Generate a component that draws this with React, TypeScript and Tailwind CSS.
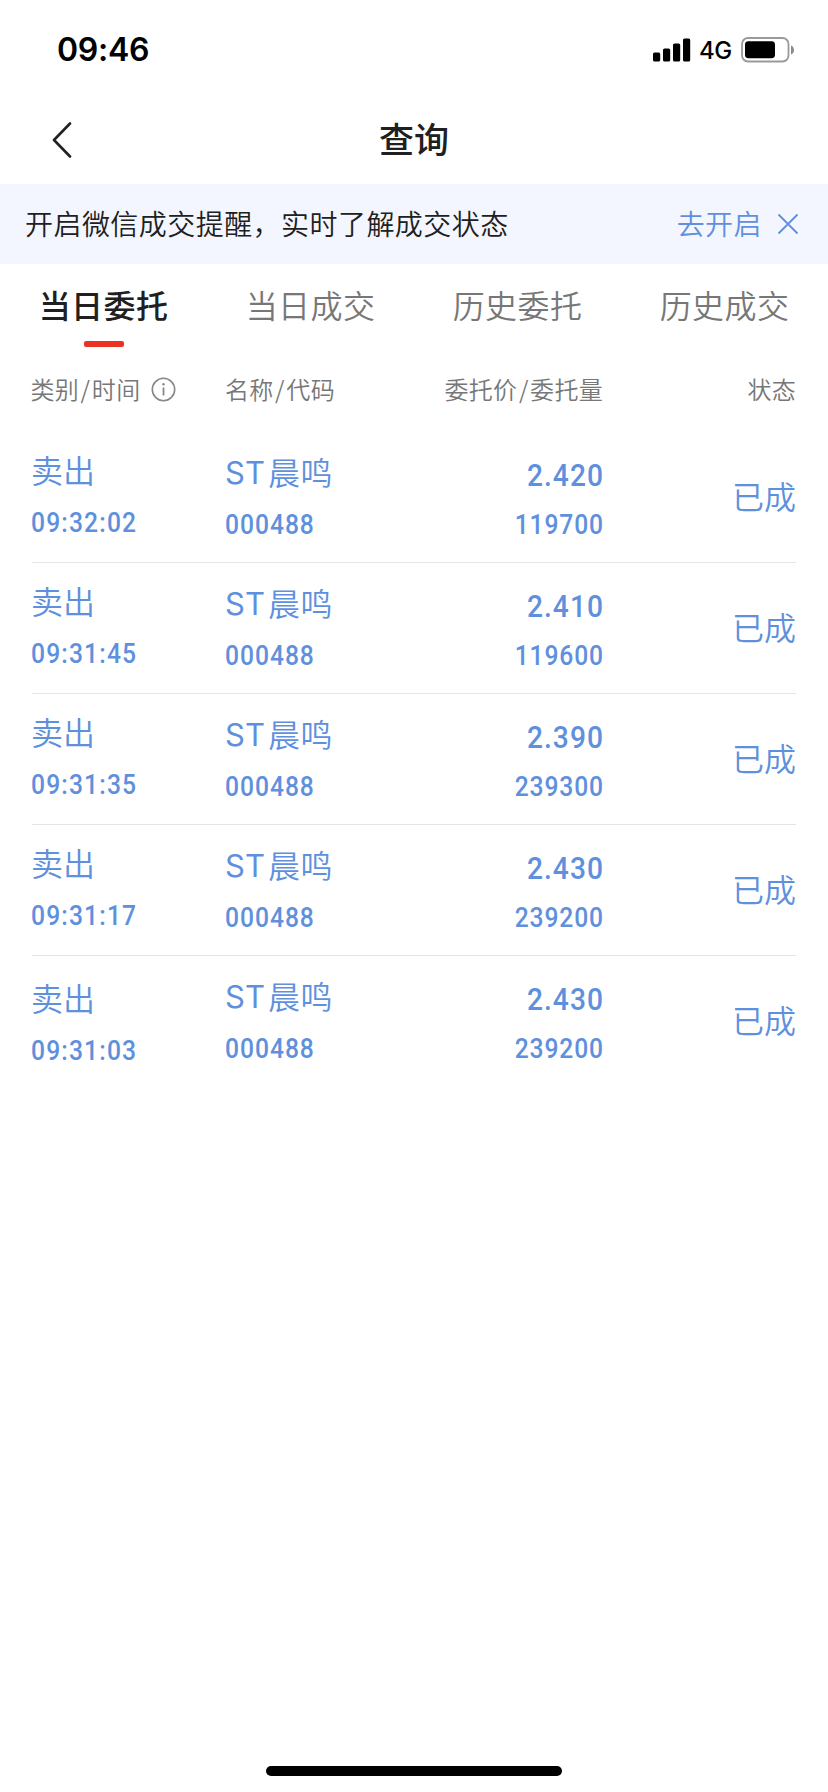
type Order = { time: string; price: string; volume: string };

const orders: Order[] = [
  { time: "09:32:02", price: "2.420", volume: "119700" },
  { time: "09:31:45", price: "2.410", volume: "119600" },
  { time: "09:31:35", price: "2.390", volume: "239300" },
  { time: "09:31:17", price: "2.430", volume: "239200" },
  { time: "09:31:03", price: "2.430", volume: "239200" },
];

const tabs = ["当日委托", "当日成交", "历史委托", "历史成交"];

function StatusBar() {
  return (
    <div className="flex h-[96px] items-start justify-between pl-[57px] pr-[33px] pt-[34px] font-[Inter,sans-serif] text-black">
      <span className="text-[32px] font-semibold leading-[32px] tracking-[-0.3px]">09:46</span>
      <div className="flex h-[32px] items-center">
        <svg width="38" height="24" viewBox="0 0 38 24">
          <rect x="0" y="14.5" width="7.2" height="9" rx="1.6" />
          <rect x="10" y="10.5" width="7.2" height="13" rx="1.6" />
          <rect x="20" y="5.5" width="7.2" height="18" rx="1.6" />
          <rect x="30" y="0.5" width="7.2" height="23" rx="1.6" />
        </svg>
        <span className="ml-[8px] w-[34px] pt-px text-[24px] font-medium leading-[32px] tracking-[-0.5px]">4G</span>
        <svg className="ml-[8px]" width="54" height="26" viewBox="0 0 54 26">
          <rect x="1" y="1" width="46.5" height="23.5" rx="6" fill="none" stroke="#9a9a9a" strokeWidth="1.8" />
          <rect x="4" y="4.2" width="30" height="17" rx="3.4" />
          <path d="M50 8.5c4 1.6 4 7.4 0 9z" fill="#8a8a8a" />
        </svg>
      </div>
    </div>
  );
}

function Label({ first, second }: { first: string; second: string }) {
  return (
    <span>
      {first}
      <span className="mx-[1.5px]">/</span>
      {second}
    </span>
  );
}

function Row({ order, last }: { order: Order; last: boolean }) {
  return (
    <div className={`flex h-[131px] ${last ? "" : "border-b border-[#e5e5e5]"}`}>
      <div className={`-ml-px w-[194px] ${last ? "pt-[21px]" : "pt-[17px]"}`}>
        <div className="text-[32px] leading-[40px]">卖出</div>
        <div className="mt-[14px] origin-left scale-x-[0.88] font-[Roboto,sans-serif] text-[28px] font-medium leading-[40px] tracking-[1.3px]">
          {order.time}
        </div>
      </div>
      <div className="w-[190px] pt-[19px]">
        <div className="flex text-[32px] leading-[40px]">
          <span className="w-[43px] pt-[2px] font-[Inter,sans-serif] text-[31px] font-normal">ST</span>
          <span className="tracking-[0.5px]">晨鸣</span>
        </div>
        <div className="mt-[12px] origin-left scale-x-[0.88] font-[Roboto,sans-serif] text-[28px] font-medium leading-[40px] tracking-[1.1px]">
          000488
        </div>
      </div>
      <div className="w-[189px] pt-[23px] text-right font-[Roboto,sans-serif] font-medium">
        <div className="origin-right scale-x-[0.88] text-[32px] leading-[40px] tracking-[1.2px]">{order.price}</div>
        <div className="mt-[10px] origin-right scale-x-[0.88] text-[28px] leading-[40px] tracking-[1px]">
          {order.volume}
        </div>
      </div>
      <div className="flex-1 pt-[43px] text-right text-[32px] leading-[40px]">已成</div>
    </div>
  );
}

export default function App() {
  return (
    <div className="flex h-[1792px] w-[828px] flex-col bg-white font-['Noto_Sans_CJK_SC',sans-serif] font-[350] text-[#202020]">
      <StatusBar />
      <header className="grid h-[88px] grid-cols-3 items-center">
        <svg className="ml-[52px]" width="20" height="36" viewBox="0 0 20 36" fill="none" stroke="#222" strokeWidth="2.6" strokeLinecap="round" strokeLinejoin="round">
          <path d="M18 1.5L2 18L18 34.5" />
        </svg>
        <h1 className="pb-[5px] text-center text-[35px] font-medium leading-[44px]">查询</h1>
      </header>
      <div className="flex h-[80px] items-center bg-[#f3f6fe] pl-[25px] pr-[29px] text-[28px] leading-[40px] tracking-[0.45px]">
        <span className="flex-1 pb-[2px]">开启微信成交提醒，实时了解成交状态</span>
        <span className="pb-[2px] text-[#5f90dd]">去开启</span>
        <svg className="ml-[15px]" width="22" height="22" viewBox="0 0 22 22" stroke="#5f90dd" strokeWidth="1.8">
          <path d="M1.5 1.5L20.5 20.5M20.5 1.5L1.5 20.5" />
        </svg>
      </div>
      <nav className="grid h-[84px] grid-cols-4 pt-[20px] text-[32px] leading-[40px] tracking-[0.4px]">
        {tabs.map((tab, i) => (
          <div key={tab} className={`flex flex-col items-center ${i === 0 ? "font-medium" : "text-[#777]"}`}>
            <span>{tab}</span>
            {i === 0 && <span className="mt-[17px] h-[6px] w-[40px] rounded-[2px] bg-[#eb3323]" />}
          </div>
        ))}
      </nav>
      <main className="px-[32px]">
        <div className="flex h-[84px] items-start pt-[25px] text-[24px] leading-[32px] tracking-[0.3px] text-[#777]">
          <div className="-ml-[1.5px] flex w-[194.5px] items-center">
            <Label first="类别" second="时间" />
            <svg className="ml-[11px]" width="25" height="25" viewBox="0 0 25 25" fill="none" stroke="#888" strokeWidth="1.6">
              <circle cx="12.5" cy="12.5" r="11.2" />
              <path d="M12.5 10.5v8" strokeWidth="1.8" />
              <circle cx="12.5" cy="7.2" r="1.2" fill="#888" stroke="none" />
            </svg>
          </div>
          <div className="w-[190px]">
            <Label first="名称" second="代码" />
          </div>
          <div className="w-[188px] text-right">
            <Label first="委托价" second="委托量" />
          </div>
          <div className="flex-1 text-right">状态</div>
        </div>
        <div className="text-[#5f90dd]">
          {orders.map((order, i) => (
            <Row key={order.time} order={order} last={i === orders.length - 1} />
          ))}
        </div>
      </main>
      <div className="mx-auto mb-[16px] mt-auto h-[10px] w-[296px] rounded-full bg-black" />
    </div>
  );
}
